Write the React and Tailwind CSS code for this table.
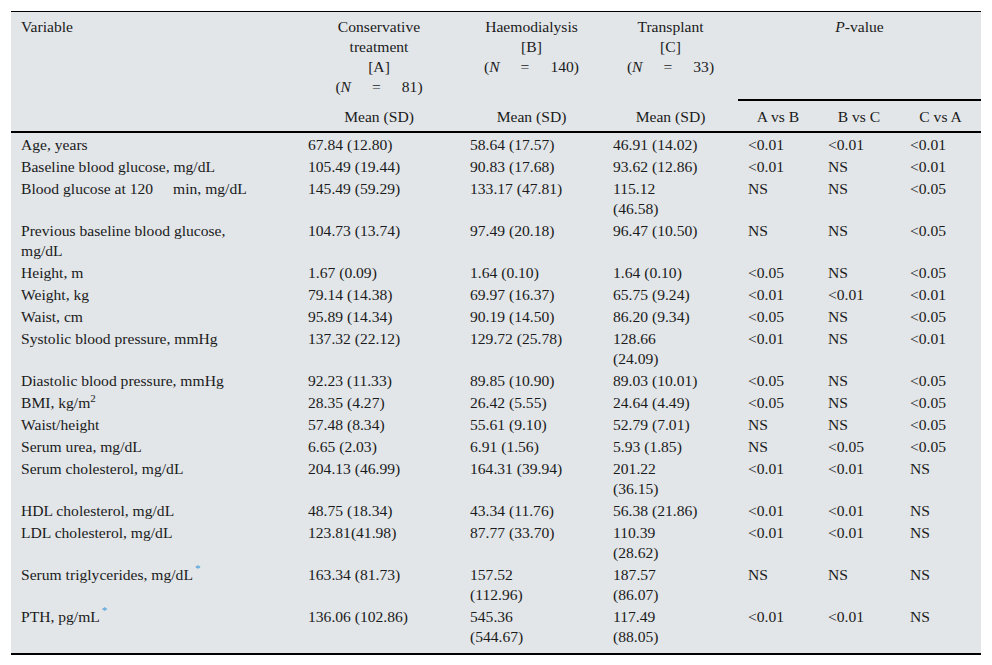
import React from "react";

const Star = () => <sup className="text-[#3a9ad9] text-[11px] relative -top-[8px] ml-[2px]">*</sup>;

const NEq = ({ n }) => (
  <span>
    (<i>N</i>
    <span className="inline-block mx-[21px]">=</span>
    {n})
  </span>
);

const rows = [
  ["Age, years", "67.84 (12.80)", "58.64 (17.57)", "46.91 (14.02)", "<0.01", "<0.01", "<0.01"],
  ["Baseline blood glucose, mg/dL", "105.49 (19.44)", "90.83 (17.68)", "93.62 (12.86)", "<0.01", "NS", "<0.01"],
  [
    <>Blood glucose at 120<span className="ml-[20px]">min, mg/dL</span></>,
    "145.49 (59.29)", "133.17 (47.81)", <>115.12<br />(46.58)</>, "NS", "NS", "<0.05",
  ],
  [<>Previous baseline blood glucose,<br />mg/dL</>, "104.73 (13.74)", "97.49 (20.18)", "96.47 (10.50)", "NS", "NS", "<0.05"],
  ["Height, m", "1.67 (0.09)", "1.64 (0.10)", "1.64 (0.10)", "<0.05", "NS", "<0.05"],
  ["Weight, kg", "79.14 (14.38)", "69.97 (16.37)", "65.75 (9.24)", "<0.01", "<0.01", "<0.01"],
  ["Waist, cm", "95.89 (14.34)", "90.19 (14.50)", "86.20 (9.34)", "<0.05", "NS", "<0.05"],
  ["Systolic blood pressure, mmHg", "137.32 (22.12)", "129.72 (25.78)", <>128.66<br />(24.09)</>, "<0.01", "NS", "<0.01"],
  ["Diastolic blood pressure, mmHg", "92.23 (11.33)", "89.85 (10.90)", "89.03 (10.01)", "<0.05", "NS", "<0.05"],
  [<>BMI, kg/m<sup className="text-[11px] relative -top-[6px]">2</sup></>, "28.35 (4.27)", "26.42 (5.55)", "24.64 (4.49)", "<0.05", "NS", "<0.05"],
  ["Waist/height", "57.48 (8.34)", "55.61 (9.10)", "52.79 (7.01)", "NS", "NS", "<0.05"],
  ["Serum urea, mg/dL", "6.65 (2.03)", "6.91 (1.56)", "5.93 (1.85)", "NS", "<0.05", "<0.05"],
  ["Serum cholesterol, mg/dL", "204.13 (46.99)", "164.31 (39.94)", <>201.22<br />(36.15)</>, "<0.01", "<0.01", "NS"],
  ["HDL cholesterol, mg/dL", "48.75 (18.34)", "43.34 (11.76)", "56.38 (21.86)", "<0.01", "<0.01", "NS"],
  ["LDL cholesterol, mg/dL", "123.81(41.98)", "87.77 (33.70)", <>110.39<br />(28.62)</>, "<0.01", "<0.01", "NS"],
  [<>Serum triglycerides, mg/dL<Star /></>, "163.34 (81.73)", <>157.52<br />(112.96)</>, <>187.57<br />(86.07)</>, "NS", "NS", "NS"],
  [<>PTH, pg/mL<Star /></>, "136.06 (102.86)", <>545.36<br />(544.67)</>, <>117.49<br />(88.05)</>, "<0.01", "<0.01", "NS"],
];

const App = () => {
  return (
    <div className="min-h-screen bg-white pt-[11px] px-[11px] font-['Liberation_Serif','Times_New_Roman',serif] text-[15.6px] leading-[20px] text-[#1b1b1b]">
      <div className="w-[970px] bg-[#e2e6e9] border-t border-black border-b-2 pb-[6px]">
        <table className="w-[970px] table-fixed border-separate border-spacing-0">
          <colgroup>
            <col className="w-[287px]" />
            <col className="w-[162px]" />
            <col className="w-[143px]" />
            <col className="w-[135px]" />
            <col className="w-[80px]" />
            <col className="w-[82px]" />
            <col className="w-[81px]" />
          </colgroup>
          <thead>
            <tr>
              <th rowSpan={2} className="font-normal text-left align-top pl-[10px] pt-[5px] border-b-2 border-black">Variable</th>
              <th className="font-normal text-center align-top pt-[5px] pb-[4px]">
                Conservative<br />treatment<br />[A]<br /><NEq n="81" />
              </th>
              <th className="font-normal text-center align-top pt-[5px] pb-[4px]">
                Haemodialysis<br />[B]<br /><NEq n="140" />
              </th>
              <th className="font-normal text-center align-top pt-[5px] pb-[4px]">
                Transplant<br />[C]<br /><NEq n="33" />
              </th>
              <th colSpan={3} className="font-normal text-center align-top pt-[5px] pb-[4px] border-b-2 border-black">
                <i>P</i>-value
              </th>
            </tr>
            <tr>
              <th className="font-normal text-center pt-[6px] pb-[4px] border-b-2 border-black">Mean (SD)</th>
              <th className="font-normal text-center pt-[6px] pb-[4px] border-b-2 border-black">Mean (SD)</th>
              <th className="font-normal text-center pt-[6px] pb-[4px] border-b-2 border-black">Mean (SD)</th>
              <th className="font-normal text-center pt-[6px] pb-[4px] border-b-2 border-black">A vs B</th>
              <th className="font-normal text-center pt-[6px] pb-[4px] border-b-2 border-black">B vs C</th>
              <th className="font-normal text-center pt-[6px] pb-[4px] border-b-2 border-black">C vs A</th>
            </tr>
          </thead>
          <tbody>
            {rows.map((r, i) => (
              <tr key={i}>
                {r.map((c, j) => (
                  <td key={j} className="align-top pl-[10px] pt-[2px] whitespace-nowrap">
                    {c}
                  </td>
                ))}
              </tr>
            ))}
          </tbody>
        </table>
      </div>
    </div>
  );
};

export default App;
